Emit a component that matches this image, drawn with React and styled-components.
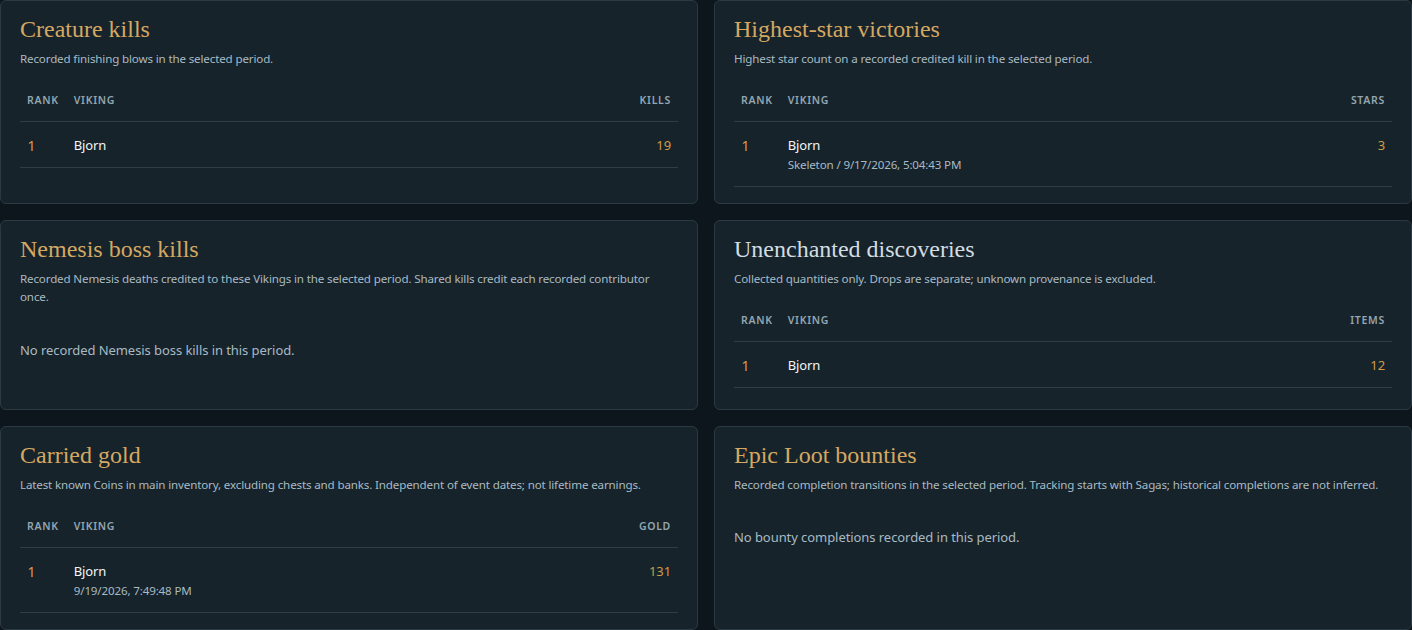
import React from 'react';
import styled, { createGlobalStyle } from 'styled-components';

const Global = createGlobalStyle`
  html, body { margin: 0; padding: 0; background: #0d151d; }
  body { font-family: "Noto Sans", "Open Sans", sans-serif; }
`;

const Grid = styled.main`
  display: grid;
  grid-template-columns: 1fr 1fr;
  gap: 16px;
`;

const Card = styled.section`
  background: #16232b;
  border: 1px solid #2b3a42;
  border-radius: 6px;
  padding: 10px 19px 16.5px;
`;

const Title = styled.h2`
  margin: 0;
  font-family: "Liberation Serif", Georgia, serif;
  font-weight: 400;
  font-size: 24px;
  line-height: 36px;
  color: ${p => (p.$muted ? '#d3dce0' : '#d4a862')};
`;

const Desc = styled.p`
  margin: 3px 0 0;
  font-size: 11.6px;
  letter-spacing: -0.15px;
  line-height: 18.4px;
  color: #a9bac3;
`;

const Table = styled.table`
  width: 100%;
  margin-top: 9.6px;
  border-collapse: collapse;
`;

const Head = styled.th`
  padding: 2px 7px 0;
  height: 43px;
  box-sizing: border-box;
  text-align: ${p => (p.$end ? 'right' : 'left')};
  font-size: 10.5px;
  font-weight: 600;
  letter-spacing: 0.7px;
  text-transform: uppercase;
  color: #93a6b0;
  border-bottom: 1px solid #2f3e46;
  &:first-child { padding-right: 8px; }
`;

const Cell = styled.td`
  padding: 14px 7px 12px;
  font-size: 13px;
  letter-spacing: -0.1px;
  line-height: 19px;
  vertical-align: top;
  border-bottom: 1px solid #2f3e46;
  text-align: ${p => (p.$end ? 'right' : 'left')};
  color: ${p => p.$color || '#f2f5f6'};
`;

const RankCell = styled(Cell)`
  padding-left: 7.5px;
  font-size: 14px;
  color: #d69c45;
`;

const Meta = styled.div`
  margin: 1px 0 0;
  font-size: 11.6px;
  letter-spacing: -0.15px;
  line-height: 18px;
  color: #a9bac3;
`;

const Empty = styled.p`
  margin: 33px 0 32.7px;
  font-size: 13px;
  letter-spacing: -0.065px;
  line-height: 20px;
  color: #a9bac3;
`;

const Board = ({ title, muted, desc, unit, row, empty }) => (
  <Card>
    <Title $muted={muted}>{title}</Title>
    <Desc>{desc}</Desc>
    {empty ? (
      <Empty>{empty}</Empty>
    ) : (
      <Table>
        <thead>
          <tr>
            <Head>Rank</Head>
            <Head style={{ width: '100%' }}>Viking</Head>
            <Head $end>{unit}</Head>
          </tr>
        </thead>
        <tbody>
          <tr>
            <RankCell>1</RankCell>
            <Cell>
              Bjorn
              {row.meta && <Meta>{row.meta}</Meta>}
            </Cell>
            <Cell $end $color="#cf9c45">{row.value}</Cell>
          </tr>
        </tbody>
      </Table>
    )}
  </Card>
);

export default function App() {
  return (
    <>
      <Global />
      <Grid>
        <Board
          title="Creature kills"
          desc="Recorded finishing blows in the selected period."
          unit="Kills"
          row={{ value: 19 }}
        />
        <Board
          title="Highest-star victories"
          desc="Highest star count on a recorded credited kill in the selected period."
          unit="Stars"
          row={{ value: 3, meta: 'Skeleton / 9/17/2026, 5:04:43 PM' }}
        />
        <Board
          title="Nemesis boss kills"
          desc="Recorded Nemesis deaths credited to these Vikings in the selected period. Shared kills credit each recorded contributor once."
          empty="No recorded Nemesis boss kills in this period."
        />
        <Board
          title="Unenchanted discoveries"
          muted
          desc="Collected quantities only. Drops are separate; unknown provenance is excluded."
          unit="Items"
          row={{ value: 12 }}
        />
        <Board
          title="Carried gold"
          desc="Latest known Coins in main inventory, excluding chests and banks. Independent of event dates; not lifetime earnings."
          unit="Gold"
          row={{ value: 131, meta: '9/19/2026, 7:49:48 PM' }}
        />
        <Board
          title="Epic Loot bounties"
          desc="Recorded completion transitions in the selected period. Tracking starts with Sagas; historical completions are not inferred."
          empty="No bounty completions recorded in this period."
        />
      </Grid>
    </>
  );
}
